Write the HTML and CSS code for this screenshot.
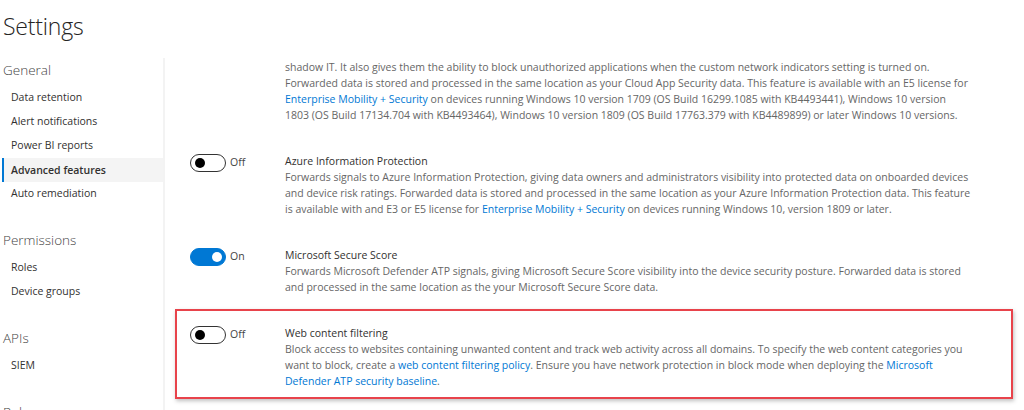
FILE: index.html
```html
<!DOCTYPE html>
<html>
<head>
<meta charset="utf-8">
<link rel="stylesheet" href="styles.css">
</head>
<body>
<div class="page">
  <header class="header"><h1 class="title">Settings</h1></header>
  <div class="body">
    <nav class="sidebar">
      <div class="group">General</div>
      <a class="item">Data retention</a>
      <a class="item">Alert notifications</a>
      <a class="item">Power BI reports</a>
      <a class="item active">Advanced features</a>
      <a class="item">Auto remediation</a>
      <div class="group">Permissions</div>
      <a class="item">Roles</a>
      <a class="item">Device groups</a>
      <div class="group">APIs</div>
      <a class="item">SIEM</a>
      <div class="group">Rules</div>
    </nav>
    <main class="content">
      <div class="row first">
        <div class="toggle-col"></div>
        <div class="text">
          <p class="desc">shadow IT. It also gives them the ability to block unauthorized applications when the custom network indicators setting is turned on.<br>Forwarded data is stored and processed in the same location as your Cloud App Security data. This feature is available with an E5 license for<br><a class="link">Enterprise Mobility + Security</a> on devices running Windows 10 version 1709 (OS Build 16299.1085 with KB4493441), Windows 10 version<br>1803 (OS Build 17134.704 with KB4493464), Windows 10 version 1809 (OS Build 17763.379 with KB4489899) or later Windows 10 versions.</p>
        </div>
      </div>
      <div class="row">
        <div class="toggle-col"><span class="toggle off"><span class="knob"></span></span><span class="state">Off</span></div>
        <div class="text">
          <div class="name">Azure Information Protection</div>
          <p class="desc">Forwards signals to Azure Information Protection, giving data owners and administrators visibility into protected data on onboarded devices<br>and device risk ratings. Forwarded data is stored and processed in the same location as your Azure Information Protection data. This feature<br>is available with and E3 or E5 license for <a class="link">Enterprise Mobility + Security</a> on devices running Windows 10, version 1809 or later.</p>
        </div>
      </div>
      <div class="row">
        <div class="toggle-col"><span class="toggle on"><span class="knob"></span></span><span class="state">On</span></div>
        <div class="text">
          <div class="name">Microsoft Secure Score</div>
          <p class="desc">Forwards Microsoft Defender ATP signals, giving Microsoft Secure Score visibility into the device security posture. Forwarded data is stored<br>and processed in the same location as the your Microsoft Secure Score data.</p>
        </div>
      </div>
      <div class="row highlight">
        <div class="toggle-col"><span class="toggle off"><span class="knob"></span></span><span class="state">Off</span></div>
        <div class="text">
          <div class="name">Web content filtering</div>
          <p class="desc">Block access to websites containing unwanted content and track web activity across all domains. To specify the web content categories you<br>want to block, create a <a class="link">web content filtering policy</a>. Ensure you have network protection in block mode when deploying the <a class="link">Microsoft<br>Defender ATP security baseline</a>.</p>
        </div>
      </div>
    </main>
  </div>
</div>
</body>
</html>
```
FILE: styles.css
```css
* { box-sizing: border-box; }
html, body { margin: 0; padding: 0; background: #fff; }
body {
  font-family: "Open Sans", "Noto Sans", sans-serif;
  color: #323130;
  width: 1024px;
  height: 410px;
  overflow: hidden;
}
.page { display: flex; flex-direction: column; height: 410px; }
.header { height: 58px; padding: 8px 0 0 3px; }
.title {
  margin: 0;
  font-weight: 300;
  font-size: 23px;
  line-height: 36px;
  color: #252423;
  letter-spacing: -0.2px;
}
.body { display: flex; flex: 1; min-height: 0; }
.sidebar {
  width: 165px;
  flex: none;
  border-right: 2px solid #f3f3f3;
  display: flex;
  flex-direction: column;
}
.group {
  font-size: 13.5px;
  font-weight: 300;
  color: #444;
  padding-left: 3px;
  line-height: 20px;
  margin-top: 25px;
  margin-bottom: 5px;
}
.group:first-child { margin-top: 2px; }
.item {
  display: block;
  font-size: 10.5px;
  line-height: 24px;
  height: 24px;
  padding-left: 11px;
  color: #323130;
}
.item.active {
  background: #f4f4f4;
  font-weight: 600;
  border-left: 2px solid #0078d4;
  margin-left: 2px;
  padding-left: 7px;
  margin-top: 1px;
  margin-bottom: -1px;
}
.content {
  flex: 1;
  padding-left: 25px;
  padding-top: 1px;
}
.row {
  display: flex;
  padding: 15px 0;
}
.row.first { padding-top: 0; }
.toggle-col {
  width: 95px;
  flex: none;
  display: flex;
  align-items: flex-start;
  padding-top: 1px;
}
.toggle {
  width: 36px;
  height: 18px;
  border-radius: 9px;
  border: 1.5px solid #333;
  position: relative;
  flex: none;
}
.toggle .knob {
  position: absolute;
  top: 2.5px;
  width: 10px;
  height: 10px;
  border-radius: 50%;
  background: #000;
}
.toggle.off .knob { left: 3.5px; }
.toggle.on { background: #0078d4; border-color: #0078d4; }
.toggle.on .knob { right: 3.5px; background: #fff; }
.state {
  font-size: 10.5px;
  line-height: 16px;
  color: #444;
  margin-left: 4px;
}
.text { flex: 1; }
.name {
  font-size: 10.5px;
  line-height: 16px;
  color: #323130;
}
.desc {
  margin: 0;
  font-size: 10.5px;
  line-height: 16px;
  color: #666;
  white-space: nowrap;
}
.link { color: #0078d4; }
.row.highlight {
  margin-left: -15px;
  margin-top: -1px;
  padding: 14px 0 8px 13px;
  width: 838px;
  border: 2px solid #e8434b;
  box-shadow: 1px 2px 4px rgba(0,0,0,0.25);
}
```
